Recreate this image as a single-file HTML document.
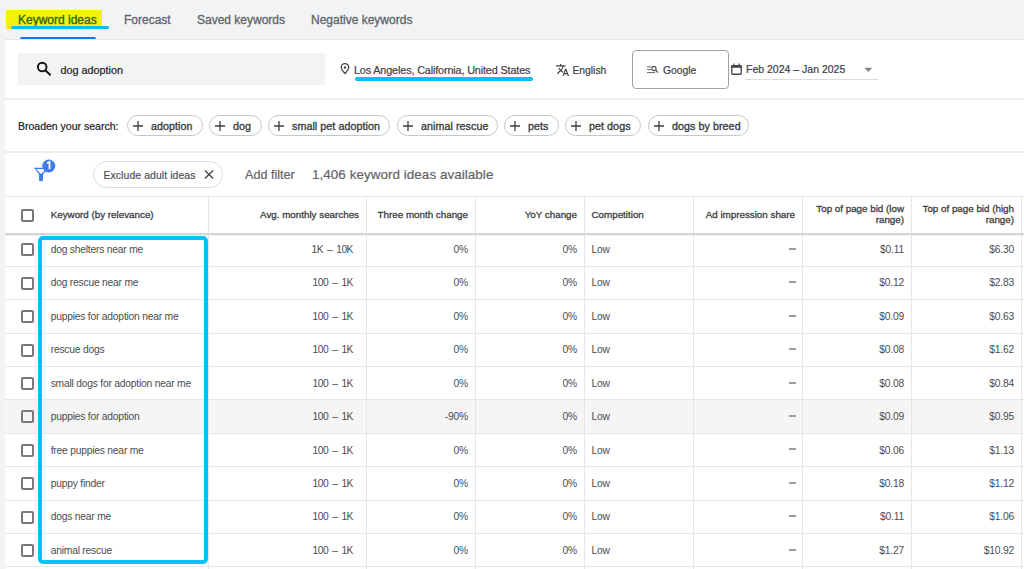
<!DOCTYPE html>
<html><head><meta charset="utf-8">
<style>
*{margin:0;padding:0;box-sizing:border-box}
.a{-webkit-text-stroke-width:0.2px}
html,body{width:1024px;height:569px;overflow:hidden;background:#f1f3f4;font-family:"Liberation Sans",sans-serif;color:#3c4043}
.a{position:absolute;white-space:nowrap}
.tab{font-size:12px;color:#5f6368;top:12.6px;line-height:14px;-webkit-text-stroke-width:0.3px}
#card{position:absolute;left:5px;top:39px;width:1019px;height:530px;background:#fff;border-top:1px solid #e3e5e8}
.chip{position:absolute;top:115px;height:21px;border:1px solid #c4c7c9;border-radius:11px;background:#fff}
.chip .p{position:absolute;left:5px;top:5px;width:10px;height:10px}
.chip span{position:absolute;top:4px;font-size:10.7px;line-height:13px;color:#3c4043;letter-spacing:0.07px;-webkit-text-stroke:0.35px #3c4043}
.hl{position:absolute;background:#e0e0e0}
.vl{position:absolute;width:1px;background:#e4e6e9}
.th{position:absolute;font-size:9.8px;color:#3c4043;-webkit-text-stroke:0.3px #3c4043;line-height:11.6px;white-space:nowrap}
.td{position:absolute;font-size:10.3px;letter-spacing:-0.22px;color:#4a4d51;line-height:12px;white-space:nowrap}
.cb{position:absolute;left:21px;width:13px;height:13px;border:2px solid #77797c;border-radius:2px}
</style></head><body>
<!-- tabs -->
<div class="a" style="left:6px;top:10px;width:96px;height:19px;background:#f2f20a"></div>
<div class="a tab" style="left:18px;color:#2a6512">Keyword ideas</div>
<div class="a" style="left:11px;top:25.5px;width:98px;height:3px;background:#00c2f6;border-radius:2px"></div>
<div class="a" style="left:20px;top:37px;width:76px;height:3px;background:#1a73e8;border-radius:2px 2px 0 0"></div>
<div class="a tab" style="left:124px">Forecast</div>
<div class="a tab" style="left:197px">Saved keywords</div>
<div class="a tab" style="left:311px">Negative keywords</div>

<div id="card"></div>
<!-- search row -->
<div class="a" style="left:18px;top:53px;width:307px;height:32px;background:#f1f3f4"></div>
<svg class="a" style="left:35px;top:61px" width="17" height="16" viewBox="0 0 17 16"><circle cx="7.2" cy="6" r="4.3" fill="none" stroke="#111" stroke-width="1.9"/><path d="M10.3 9.2 L15.6 14.3" stroke="#111" stroke-width="2"/></svg>
<div class="a" style="left:60.5px;top:63.7px;font-size:10.8px;line-height:13px;color:#202124">dog adoption</div>

<svg class="a" style="left:340px;top:63.3px" width="10" height="12" viewBox="0 0 10 12"><path d="M5 10.6 C3.2 8.5 1.2 6.4 1.2 4.5 A3.8 3.8 0 0 1 8.8 4.5 C8.8 6.4 6.8 8.5 5 10.6Z" fill="none" stroke="#44474b" stroke-width="1.3"/><circle cx="5" cy="4.5" r="1.25" fill="#44474b"/></svg>
<div class="a" style="left:354px;top:63.7px;font-size:10.8px;line-height:13px;color:#3c4043;letter-spacing:-0.13px">Los Angeles, California, United States</div>
<div class="a" style="left:354.5px;top:77px;width:178.5px;height:3.6px;background:#00c2f6;border-radius:2px"></div>

<svg class="a" style="left:556px;top:63.6px" width="13" height="12" viewBox="1 2 22 20"><path fill="#3c4043" d="M12.87 15.07l-2.54-2.51.03-.03c1.74-1.94 2.98-4.170 3.71-6.53H17V4h-7V2H8v2H1v1.99h11.17C11.5 7.92 10.44 9.75 9 11.35 8.07 10.32 7.3 9.19 6.69 8h-2c.73 1.63 1.73 3.17 2.980 4.56l-5.09 5.02L4 19l5-5 3.110 3.110.76-2.04zM18.5 10h-2L12 22h2l1.12-3h4.75L21 22h2l-4.5-12zm-2.62 7l1.62-4.33L19.12 17h-3.24z"/></svg>
<div class="a" style="left:572.5px;top:63.7px;font-size:10.3px;line-height:13px;color:#3c4043">English</div>

<div class="a" style="left:632px;top:50px;width:97px;height:39px;border:1px solid #9ea2a6;border-radius:4px"></div>
<svg class="a" style="left:647px;top:66px" width="12" height="8" viewBox="0 0 12 8"><path d="M0 0.9H4.3M0 3.6H4.3M0 6.6H8" stroke="#5f6368" stroke-width="1"/><circle cx="7" cy="2.5" r="2.1" fill="none" stroke="#4a4d51" stroke-width="1.1"/><path d="M8.5 4 L10.9 6.6" stroke="#4a4d51" stroke-width="1.2"/></svg>
<div class="a" style="left:663px;top:63.7px;font-size:10.3px;line-height:13px;color:#3c4043">Google</div>

<svg class="a" style="left:731px;top:63px" width="11" height="12" viewBox="0 0 11 12"><rect x="0.75" y="2.6" width="9.5" height="8.65" rx="1" fill="none" stroke="#44474b" stroke-width="1.3"/><rect x="0.5" y="2" width="10" height="2.8" fill="#44474b"/><path d="M3 0.6V2.6M8 0.6V2.6" stroke="#44474b" stroke-width="1.2"/></svg>
<div class="a" style="left:746px;top:63px;font-size:10.5px;line-height:13px;color:#3c4043">Feb 2024 – Jan 2025</div>
<svg class="a" style="left:864px;top:67px" width="9" height="6" viewBox="0 0 9 6"><path d="M0.5 0.8H8.2L4.35 5Z" fill="#7f8387"/></svg>
<div class="a" style="left:745px;top:79px;width:133px;height:1px;background:#dadce0"></div>

<div class="hl" style="left:5px;top:98px;width:1019px;height:2px;background:#ececec"></div>

<!-- broaden -->
<div class="a" style="left:18px;top:119.5px;font-size:10.5px;line-height:13px;color:#202124">Broaden your search:</div>
<div class="chip" style="left:127px;width:76px"><svg class="p" width="10" height="10" viewBox="0 0 10 10"><path d="M5 0V10M0 5H10" stroke="#3c4043" stroke-width="1.3"/></svg><span style="left:23px">adoption</span></div>
<div class="chip" style="left:209px;width:53px"><svg class="p" width="10" height="10" viewBox="0 0 10 10"><path d="M5 0V10M0 5H10" stroke="#3c4043" stroke-width="1.3"/></svg><span style="left:23px">dog</span></div>
<div class="chip" style="left:268px;width:122px"><svg class="p" width="10" height="10" viewBox="0 0 10 10"><path d="M5 0V10M0 5H10" stroke="#3c4043" stroke-width="1.3"/></svg><span style="left:23px">small pet adoption</span></div>
<div class="chip" style="left:397px;width:101px"><svg class="p" width="10" height="10" viewBox="0 0 10 10"><path d="M5 0V10M0 5H10" stroke="#3c4043" stroke-width="1.3"/></svg><span style="left:23px">animal rescue</span></div>
<div class="chip" style="left:504px;width:55px"><svg class="p" width="10" height="10" viewBox="0 0 10 10"><path d="M5 0V10M0 5H10" stroke="#3c4043" stroke-width="1.3"/></svg><span style="left:23px">pets</span></div>
<div class="chip" style="left:565px;width:76px"><svg class="p" width="10" height="10" viewBox="0 0 10 10"><path d="M5 0V10M0 5H10" stroke="#3c4043" stroke-width="1.3"/></svg><span style="left:23px">pet dogs</span></div>
<div class="chip" style="left:648px;width:101px"><svg class="p" width="10" height="10" viewBox="0 0 10 10"><path d="M5 0V10M0 5H10" stroke="#3c4043" stroke-width="1.3"/></svg><span style="left:23px">dogs by breed</span></div>

<div class="hl" style="left:5px;top:151px;width:1019px;height:2px;background:#ececec"></div>

<!-- filter row -->
<svg class="a" style="left:28px;top:155px" width="32" height="32" viewBox="0 0 32 32"><path d="M6 12.8 H21 L15 19.2 V26 H11.1 V19.2 Z" fill="#3d7ceb"/><path d="M8 14.1 H18.6 L13.05 19 Z" fill="#fff"/><circle cx="20.8" cy="11" r="6.5" fill="#3d7ceb"/><path d="M18.9 8.3 L21.5 7 V14.3" fill="none" stroke="#fff" stroke-width="1.7"/></svg>
<div class="a" style="left:93px;top:161px;width:130px;height:27px;border:1px solid #dadce0;border-radius:14px"></div>
<div class="a" style="left:103.5px;top:168.7px;font-size:10.4px;line-height:13px;color:#4d5156;letter-spacing:0.1px;-webkit-text-stroke:0.2px #4d5156">Exclude adult ideas</div>
<svg class="a" style="left:204px;top:170px" width="10" height="9" viewBox="0 0 10 9"><path d="M0.8 0.5 L9.2 8.5 M9.2 0.5 L0.8 8.5" stroke="#3c4043" stroke-width="1.25"/></svg>
<div class="a" style="left:245px;top:167.5px;font-size:12.6px;line-height:14px;color:#5f6368">Add filter</div>
<div class="a" style="left:312px;top:166.5px;font-size:13.4px;line-height:15px;color:#5f6368;letter-spacing:0.07px">1,406 keyword ideas available</div>

<div class="hl" style="left:5px;top:196px;width:1019px;height:1px;background:#e6e6e6"></div>

<div id="table"><div class="hl" style="left:5px;top:400px;width:1016px;height:33px;background:#f5f5f5"></div>
<div class="hl" style="left:5px;top:266.0px;width:1019px;height:1px;background:#e6e8eb"></div>
<div class="hl" style="left:5px;top:299.0px;width:1019px;height:1px;background:#e6e8eb"></div>
<div class="hl" style="left:5px;top:333.0px;width:1019px;height:1px;background:#e6e8eb"></div>
<div class="hl" style="left:5px;top:366.0px;width:1019px;height:1px;background:#e6e8eb"></div>
<div class="hl" style="left:5px;top:399.0px;width:1019px;height:1px;background:#e6e8eb"></div>
<div class="hl" style="left:5px;top:433.0px;width:1019px;height:1px;background:#e6e8eb"></div>
<div class="hl" style="left:5px;top:466.0px;width:1019px;height:1px;background:#e6e8eb"></div>
<div class="hl" style="left:5px;top:500.0px;width:1019px;height:1px;background:#e6e8eb"></div>
<div class="hl" style="left:5px;top:533.0px;width:1019px;height:1px;background:#e6e8eb"></div>
<div class="hl" style="left:5px;top:566.0px;width:1019px;height:1px;background:#e6e8eb"></div>
<div class="vl" style="left:208px;top:197px;height:372px"></div>
<div class="vl" style="left:366px;top:197px;height:372px"></div>
<div class="vl" style="left:475px;top:197px;height:372px"></div>
<div class="vl" style="left:584px;top:197px;height:372px"></div>
<div class="vl" style="left:693px;top:197px;height:372px"></div>
<div class="vl" style="left:802px;top:197px;height:372px"></div>
<div class="vl" style="left:911px;top:197px;height:372px"></div>
<div class="vl" style="left:1021px;top:197px;height:372px"></div>
<div class="hl" style="left:5px;top:233px;width:1019px;height:2px;background:#d3d5d8"></div>
<div class="hl" style="left:5px;top:235px;width:1019px;height:1px;background:#f1f2f3"></div>
<div class="cb" style="top:209px"></div>
<div class="th" style="left:50.7px;top:208.8px">Keyword (by relevance)</div>
<div class="th" style="right:665px;top:208.8px;text-align:right">Avg. monthly searches</div>
<div class="th" style="right:556px;top:208.8px;text-align:right">Three month change</div>
<div class="th" style="right:447px;top:208.8px;text-align:right">YoY change</div>
<div class="th" style="left:591.5px;top:208.8px">Competition</div>
<div class="th" style="right:229px;top:208.8px;text-align:right">Ad impression share</div>
<div class="th" style="right:120px;top:202.8px;text-align:right">Top of page bid (low<br>range)</div>
<div class="th" style="right:10px;top:202.8px;text-align:right">Top of page bid (high<br>range)</div>
<div class="cb" style="top:243.2px"></div>
<div class="td" style="left:50.7px;top:244.0px">dog shelters near me</div>
<div class="td" style="right:671px;top:244.0px;text-align:right;letter-spacing:-0.5px;word-spacing:1.6px">1K – 10K</div>
<div class="td" style="right:556px;top:244.0px;text-align:right">0%</div>
<div class="td" style="right:447px;top:244.0px;text-align:right">0%</div>
<div class="td" style="left:591.5px;top:244.0px">Low</div>
<div class="hl" style="left:789px;top:248px;width:7px;height:2px;background:#9a9da1"></div>
<div class="td" style="right:120px;top:244.0px;text-align:right">$0.11</div>
<div class="td" style="right:10px;top:244.0px;text-align:right">$6.30</div>
<div class="cb" style="top:276.6px"></div>
<div class="td" style="left:50.7px;top:277.4px">dog rescue near me</div>
<div class="td" style="right:671px;top:277.4px;text-align:right;letter-spacing:-0.5px;word-spacing:1.6px">100 – 1K</div>
<div class="td" style="right:556px;top:277.4px;text-align:right">0%</div>
<div class="td" style="right:447px;top:277.4px;text-align:right">0%</div>
<div class="td" style="left:591.5px;top:277.4px">Low</div>
<div class="hl" style="left:789px;top:281px;width:7px;height:2px;background:#9a9da1"></div>
<div class="td" style="right:120px;top:277.4px;text-align:right">$0.12</div>
<div class="td" style="right:10px;top:277.4px;text-align:right">$2.83</div>
<div class="cb" style="top:310.0px"></div>
<div class="td" style="left:50.7px;top:310.8px">puppies for adoption near me</div>
<div class="td" style="right:671px;top:310.8px;text-align:right;letter-spacing:-0.5px;word-spacing:1.6px">100 – 1K</div>
<div class="td" style="right:556px;top:310.8px;text-align:right">0%</div>
<div class="td" style="right:447px;top:310.8px;text-align:right">0%</div>
<div class="td" style="left:591.5px;top:310.8px">Low</div>
<div class="hl" style="left:789px;top:315px;width:7px;height:2px;background:#9a9da1"></div>
<div class="td" style="right:120px;top:310.8px;text-align:right">$0.09</div>
<div class="td" style="right:10px;top:310.8px;text-align:right">$0.63</div>
<div class="cb" style="top:343.5px"></div>
<div class="td" style="left:50.7px;top:344.3px">rescue dogs</div>
<div class="td" style="right:671px;top:344.3px;text-align:right;letter-spacing:-0.5px;word-spacing:1.6px">100 – 1K</div>
<div class="td" style="right:556px;top:344.3px;text-align:right">0%</div>
<div class="td" style="right:447px;top:344.3px;text-align:right">0%</div>
<div class="td" style="left:591.5px;top:344.3px">Low</div>
<div class="hl" style="left:789px;top:348px;width:7px;height:2px;background:#9a9da1"></div>
<div class="td" style="right:120px;top:344.3px;text-align:right">$0.08</div>
<div class="td" style="right:10px;top:344.3px;text-align:right">$1.62</div>
<div class="cb" style="top:376.9px"></div>
<div class="td" style="left:50.7px;top:377.7px">small dogs for adoption near me</div>
<div class="td" style="right:671px;top:377.7px;text-align:right;letter-spacing:-0.5px;word-spacing:1.6px">100 – 1K</div>
<div class="td" style="right:556px;top:377.7px;text-align:right">0%</div>
<div class="td" style="right:447px;top:377.7px;text-align:right">0%</div>
<div class="td" style="left:591.5px;top:377.7px">Low</div>
<div class="hl" style="left:789px;top:382px;width:7px;height:2px;background:#9a9da1"></div>
<div class="td" style="right:120px;top:377.7px;text-align:right">$0.08</div>
<div class="td" style="right:10px;top:377.7px;text-align:right">$0.84</div>
<div class="cb" style="top:410.3px"></div>
<div class="td" style="left:50.7px;top:411.1px">puppies for adoption</div>
<div class="td" style="right:671px;top:411.1px;text-align:right;letter-spacing:-0.5px;word-spacing:1.6px">100 – 1K</div>
<div class="td" style="right:556px;top:411.1px;text-align:right">-90%</div>
<div class="td" style="right:447px;top:411.1px;text-align:right">0%</div>
<div class="td" style="left:591.5px;top:411.1px">Low</div>
<div class="hl" style="left:789px;top:415px;width:7px;height:2px;background:#9a9da1"></div>
<div class="td" style="right:120px;top:411.1px;text-align:right">$0.09</div>
<div class="td" style="right:10px;top:411.1px;text-align:right">$0.95</div>
<div class="cb" style="top:443.8px"></div>
<div class="td" style="left:50.7px;top:444.5px">free puppies near me</div>
<div class="td" style="right:671px;top:444.5px;text-align:right;letter-spacing:-0.5px;word-spacing:1.6px">100 – 1K</div>
<div class="td" style="right:556px;top:444.5px;text-align:right">0%</div>
<div class="td" style="right:447px;top:444.5px;text-align:right">0%</div>
<div class="td" style="left:591.5px;top:444.5px">Low</div>
<div class="hl" style="left:789px;top:448px;width:7px;height:2px;background:#9a9da1"></div>
<div class="td" style="right:120px;top:444.5px;text-align:right">$0.06</div>
<div class="td" style="right:10px;top:444.5px;text-align:right">$1.13</div>
<div class="cb" style="top:477.2px"></div>
<div class="td" style="left:50.7px;top:478.0px">puppy finder</div>
<div class="td" style="right:671px;top:478.0px;text-align:right;letter-spacing:-0.5px;word-spacing:1.6px">100 – 1K</div>
<div class="td" style="right:556px;top:478.0px;text-align:right">0%</div>
<div class="td" style="right:447px;top:478.0px;text-align:right">0%</div>
<div class="td" style="left:591.5px;top:478.0px">Low</div>
<div class="hl" style="left:789px;top:482px;width:7px;height:2px;background:#9a9da1"></div>
<div class="td" style="right:120px;top:478.0px;text-align:right">$0.18</div>
<div class="td" style="right:10px;top:478.0px;text-align:right">$1.12</div>
<div class="cb" style="top:510.6px"></div>
<div class="td" style="left:50.7px;top:511.4px">dogs near me</div>
<div class="td" style="right:671px;top:511.4px;text-align:right;letter-spacing:-0.5px;word-spacing:1.6px">100 – 1K</div>
<div class="td" style="right:556px;top:511.4px;text-align:right">0%</div>
<div class="td" style="right:447px;top:511.4px;text-align:right">0%</div>
<div class="td" style="left:591.5px;top:511.4px">Low</div>
<div class="hl" style="left:789px;top:515px;width:7px;height:2px;background:#9a9da1"></div>
<div class="td" style="right:120px;top:511.4px;text-align:right">$0.11</div>
<div class="td" style="right:10px;top:511.4px;text-align:right">$1.06</div>
<div class="cb" style="top:544.0px"></div>
<div class="td" style="left:50.7px;top:544.8px">animal rescue</div>
<div class="td" style="right:671px;top:544.8px;text-align:right;letter-spacing:-0.5px;word-spacing:1.6px">100 – 1K</div>
<div class="td" style="right:556px;top:544.8px;text-align:right">0%</div>
<div class="td" style="right:447px;top:544.8px;text-align:right">0%</div>
<div class="td" style="left:591.5px;top:544.8px">Low</div>
<div class="hl" style="left:789px;top:549px;width:7px;height:2px;background:#9a9da1"></div>
<div class="td" style="right:120px;top:544.8px;text-align:right">$1.27</div>
<div class="td" style="right:10px;top:544.8px;text-align:right">$10.92</div>
<div class="a" style="left:38px;top:236px;width:170px;height:328px;border:4px solid #00c2f6;border-radius:5px"></div></div><!--endtable-->
</body></html>
